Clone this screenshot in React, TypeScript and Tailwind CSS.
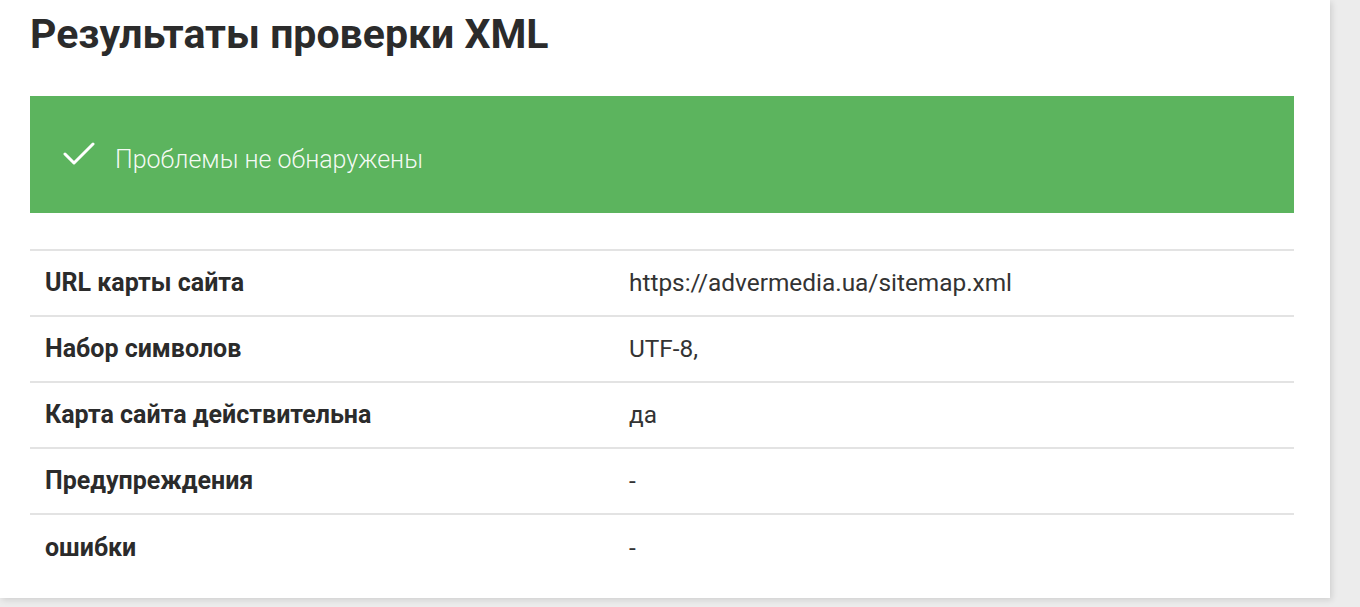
const rows = [
  { label: "URL карты сайта", value: "https://advermedia.ua/sitemap.xml" },
  { label: "Набор символов", value: "UTF-8," },
  { label: "Карта сайта действительна", value: "да" },
  { label: "Предупреждения", value: "-" },
  { label: "ошибки", value: "-" },
];

const App = () => {
  return (
    <div className="flex h-[607px] w-[1360px] overflow-hidden bg-[#ececec] font-['Roboto',sans-serif]">
      <div className="w-[1330px] h-[598px] bg-white pl-[30px] pr-[36px] shadow-[2px_2px_6px_rgba(0,0,0,0.12)]">
        <h1 className="mt-[8px] text-[41px] leading-[52px] font-bold text-[#2b2b2b]">
          Результаты проверки XML
        </h1>

        <div className="mt-[36px] h-[117px] bg-[#5cb45e] flex items-center pl-[33px]">
          <svg width="32" height="26" viewBox="0 0 32 26" className="mb-[1px]">
            <path d="M2 13 L11 22 L30 3" fill="none" stroke="white" strokeWidth="3" strokeLinecap="round" strokeLinejoin="round" />
          </svg>
          <span className="ml-[20px] pt-[10px] text-[25px] font-light text-white/95">
            Проблемы не обнаружены
          </span>
        </div>

        <div className="mt-[36px] border-t-2 border-[#e3e3e3]">
          {rows.map((r, i) => (
            <div
              key={i}
              className={
                "flex h-[66px] items-center " +
                (i < rows.length - 1 ? "border-b-2 border-[#e3e3e3]" : "")
              }
            >
              <div className="w-[599px] pl-[15px] text-[25px] font-bold text-[#2b2b2b]">
                {r.label}
              </div>
              <div className="text-[24.4px] text-[#333333]">{r.value}</div>
            </div>
          ))}
        </div>
      </div>
      <div className="flex-1" />
    </div>
  );
};

export default App;
